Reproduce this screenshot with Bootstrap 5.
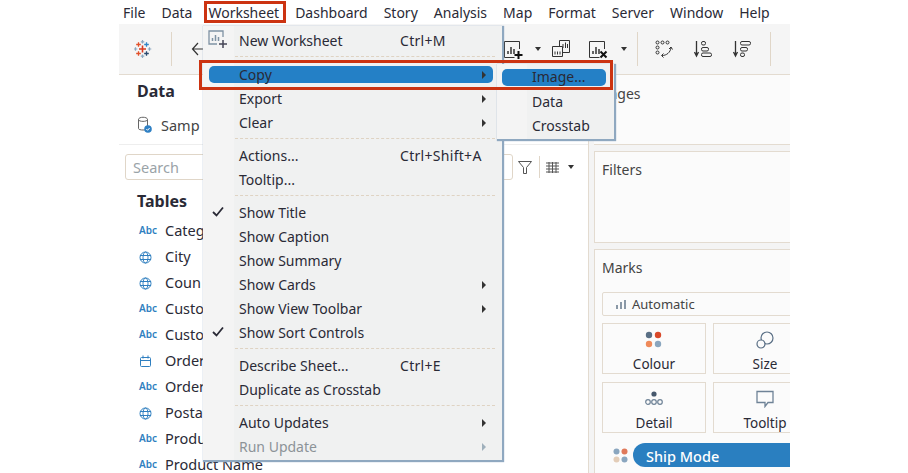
<!DOCTYPE html>
<html lang="en"><head><meta charset="utf-8"><title>Worksheet menu</title>
<link href="https://cdn.jsdelivr.net/npm/bootstrap@5.3.0/dist/css/bootstrap.min.css" rel="stylesheet">
<style>
html,body{height:473px;overflow:hidden;background:#fff}
body{font-family:"Noto Sans","Open Sans","Liberation Sans",sans-serif;color:#2a2a36;font-size:14px}
.app{position:relative;width:671px;height:473px;margin-left:119px;overflow:hidden}
.mbar{height:24px;padding-left:4px;gap:16.040px;font-size:14px;line-height:26px;white-space:nowrap}
.tbar{height:51px;background:#f5f5f5;border-bottom:1px solid #e3dbd0;padding-right:19px}
.tsep{width:1px;height:34px;background:#e0d6c8}
.tcaret{width:0;height:0;border-left:3px solid transparent;border-right:3px solid transparent;border-top:4px solid #333}
.t-logo{margin-left:15px}.t-sep1{margin-left:19px}.t-back{margin-left:19px}
.t-car1{margin-left:10.500px}.t-ic2{margin-left:11.500px}.t-ic3{margin-left:19px}.t-car2{margin-left:12px}.t-sep2{margin-left:10px}
.t-ic4{margin-left:17px}.t-ic5{margin-left:21px}.t-ic6{margin-left:20px}.t-sep3{margin-left:19px}
.main{height:398px}
.dpane{width:470px;flex:none;border-right:1px solid #e3dbd0;background:#fff}
.dhead{height:70px;border-bottom:1px solid #eee;padding:4px 0 0 18px}
.dtitle{font-weight:700;font-size:16px;line-height:24px}
.dsrc{margin-top:11px;font-size:14.500px;line-height:22px;color:#444;gap:8px}
.stool{height:26px;margin:9px 0 0 6px}
.sbox{width:388px;height:26px;border:1px solid #e0d6c8;border-radius:3px;padding-left:7px;color:#9aa3a8;line-height:24px;font-size:14.500px}
.s-fun{margin-left:4px}.s-sep{height:22px;margin-left:6px}.s-list{margin-left:6px}.s-car{margin-left:9px}
.tabh{font-weight:700;font-size:16px;line-height:22px;margin:10px 0 5px 18px}
.frow{height:26px;line-height:26px;font-size:14.500px;white-space:nowrap;padding-left:20px}
.ficon{width:26px;flex:none;color:#2f7fc0;font-size:10px;font-weight:600}
.rpane{flex:1;background:#f4f4f4;overflow:hidden;padding-left:5px}
.rbox{width:240px;background:#fbfbfb;border:1px solid #e3dbd0;padding-left:7px;color:#444;font-size:14px}
.rpages{height:70px;border-width:0 0 1px 0;padding-top:8px}
.rfilters{height:92px;margin-top:6px;padding-top:7px}
.rmarks{height:240px;margin-top:6px;padding-top:7px}
.autobox{height:24px;width:220px;margin-top:14px;border:1px solid #e3dbd0;border-radius:2px;font-size:13px;padding-left:13px;gap:6px;line-height:22px}
.tiles{display:grid;grid-template-columns:104px 104px;gap:8px 7px;margin-top:7px}
.tile{height:51px;border:1px solid #e3dbd0;text-align:center;font-size:13.500px;color:#2a2a36;line-height:18px;padding-top:7px}
.tile svg{display:block;margin:0 auto 6px}
.shelf{margin-top:10px;gap:5px}
.s-dots{margin-left:11px}
.spill{height:24px;width:190px;background:#2a7fc0;color:#fff;border-radius:12px 0 0 12px;padding-left:13px;font-size:14.500px;font-weight:500;line-height:26px}
.wmenu.dropdown-menu{border:0;border-radius:0;background:#f0f1f1;padding:3px 0 1px;margin:0;min-width:0;color:#2a2a36;font-size:14px;box-shadow:1px 1px 1px 1px #8fa8c0;z-index:5}
.mmain{left:84px;top:26px;width:299px}
.msub{left:378px;top:64px;width:117px;z-index:6!important;padding-top:1px!important}
.wmenu::before{content:"";position:absolute;left:0;top:0;bottom:0;background:#f4f4f4}
.mmain::before{width:31px}
.msub::before{width:30px}
.wmenu .dropdown-item{position:relative;height:24px;line-height:24px;padding:0 0 0 36px;color:#2a2a36;background:none;white-space:nowrap;z-index:1}
.msub .dropdown-item{padding-left:35px}
.msub .dropdown-item.msel{margin-bottom:1px}
.wmenu .mkey{position:absolute;left:197px;top:0;letter-spacing:.3px}
.wmenu .marrow{position:absolute;right:16px;top:8px;width:0;height:0;border-top:4px solid transparent;border-bottom:4px solid transparent;border-left:4px solid #333}
.wmenu .mcheck{position:absolute;left:9px;top:5px}
.wmenu .micon{position:absolute;left:5px;top:1px}
.wmenu .dropdown-item.msel::before{content:"";position:absolute;z-index:-1;left:6px;right:9px;top:3px;height:17px;background:#2480c6;border-radius:5px}
.msub .dropdown-item.msel::before{left:5px;right:8px;top:4px}
.wmenu .dropdown-item.disabled{color:#8c9398}
.wmenu .disabled .marrow{border-left-color:#9fb0bc}
.msepa{position:relative;height:9px;z-index:1}
.msepa.tall{height:10px}
.msepa::after{content:"";position:absolute;left:32px;right:7px;top:3px;border-top:1px dashed #dfd3c3}
.rmark{position:absolute;border:3px solid #cc3311;z-index:9;pointer-events:none}
.rm1{left:85px;top:1px;width:82px;height:22px}
.rm2{left:80px;top:60px;width:414px;height:30px}
</style></head><body>
<div class="app">
  <div class="mbar d-flex">
    <span>File</span><span>Data</span><span>Worksheet</span><span>Dashboard</span><span>Story</span><span>Analysis</span><span>Map</span><span>Format</span><span>Server</span><span>Window</span><span>Help</span>
  </div>
  <div class="tbar d-flex align-items-center">
    <svg class="t-logo" width="18" height="18" viewBox="0 0 18 18" fill="none">
      <path stroke="#d9391e" stroke-width="1.600" d="M8.500 5.500v7M5 9h7"/>
      <path stroke="#e2502a" stroke-width="1.300" d="M4.500 2.200v4.600M2.200 4.500h4.600M4.500 11.200v4.600M2.200 13.500h4.600"/>
      <path stroke="#2f86c8" stroke-width="1.300" d="M12.500 2.200v4.600M10.200 4.500h4.600"/>
      <path stroke="#2b4a70" stroke-width="1.300" d="M12.500 11.200v4.600M10.200 13.500h4.600"/>
      <path stroke="#8aa6bf" stroke-width="1.200" d="M8.500 0v3.500M6.800 1.800h3.500M8.500 14.500V18M6.800 16.200h3.500M1.500 7.200v3.500M0 9h3.300M15.500 7.200v3.500M13.800 9h3.500"/>
    </svg>
    <span class="tsep t-sep1"></span>
    <svg class="t-back" width="16" height="14" viewBox="0 0 16 14" fill="none" stroke="#333" stroke-width="1.200"><path d="M7 1 1.500 7 7 13M1.500 7H16"/></svg>
    <div class="ms-auto d-flex align-items-center">
      <svg width="20" height="20" viewBox="0 0 20 20" fill="none" stroke="#333"><path d="M15.500 10V2.500H.5v16h10"/><path d="M4 15v-3M7 15V8M10 15v-5" stroke-width="1.500"/><path d="M14.500 12v8M10.500 16h8" stroke="#111" stroke-width="2"/></svg>
      <span class="tcaret t-car1"></span>
      <svg class="t-ic2" width="18" height="18" viewBox="0 0 18 18" fill="none" stroke="#333"><path d="M7.500 6V.5h10v12h-7"/><path d="M.5 6.500h10v10H.5z" fill="#f5f5f5"/><path d="M3 14.500v-3M5.500 14.500v-3M8 14.500v-3M11 8V4M13.500 8V2.500M15.500 8V4"/></svg>
      <svg class="t-ic3" width="20" height="20" viewBox="0 0 20 20" fill="none" stroke="#333"><path d="M15.500 10V2.500H.5v16h10"/><path d="M4 15v-3M7 15V8M10 15v-5" stroke-width="1.500"/><path d="M11.500 12.500l6 6M17.500 12.500l-6 6" stroke="#111" stroke-width="2"/></svg>
      <span class="tcaret t-car2"></span>
      <span class="tsep t-sep2"></span>
      <svg class="t-ic4" width="18" height="18" viewBox="0 0 18 18" fill="none" stroke="#333"><circle cx="2.500" cy="2.500" r="1.500"/><circle cx="7.500" cy="2.500" r="1.500"/><circle cx="12.500" cy="2.500" r="1.500"/><circle cx="2.500" cy="7.500" r="1.500"/><circle cx="2.500" cy="12.500" r="1.500"/><path d="M7 15.500c4.500 0 8.500-3 9-8M14 9l2-2 1.500 2.500M8.500 13.500 6.500 15.500l2 2"/></svg>
      <svg class="t-ic5" width="18" height="18" viewBox="0 0 18 18" fill="none" stroke="#333"><path d="M2.500 1v15M.5 12l2 4 2-4" stroke-width="1.300"/><rect x="7.500" y="1.500" width="4" height="3.500" rx="1.500"/><rect x="7.500" y="7.500" width="7" height="3.500" rx="1.500"/><rect x="7.500" y="13" width="10" height="3.500" rx="1.500"/></svg>
      <svg class="t-ic6" width="19" height="18" viewBox="0 0 19 18" fill="none" stroke="#333"><path d="M3.500 1v15M1.500 12l2 4 2-4" stroke-width="1.300"/><rect x="8.500" y="1.500" width="10" height="3.500" rx="1.500"/><rect x="8.500" y="7.500" width="7" height="3.500" rx="1.500"/><rect x="8.500" y="13" width="4" height="3.500" rx="1.500"/></svg>
      <span class="tsep t-sep3"></span>
    </div>
  </div>
  <div class="main d-flex">
    <div class="dpane">
      <div class="dhead">
        <div class="dtitle">Data</div>
        <div class="dsrc d-flex align-items-center">
          <svg width="16" height="18" viewBox="0 0 16 18" fill="none"><path d="M1.500 3.500c0-3 9-3 9 0v9c0 2-9 2-9 0zM1.500 3.500c0 2.500 9 2.500 9 0" stroke="#666"/><circle cx="11" cy="13" r="3.800" fill="#2f80c4"/><path d="m9.300 13 1.300 1.300 2-2.300" stroke="#fff"/></svg>
          <span>Samp</span>
        </div>
      </div>
      <div class="stool d-flex align-items-center">
        <div class="sbox">Search</div>
        <svg class="s-fun" width="16" height="16" viewBox="0 0 16 16" fill="none" stroke="#555"><path d="M1.500 2.500h13L9.500 8.500v6h-3v-6z"/></svg>
        <span class="tsep s-sep"></span>
        <svg class="s-list" width="13" height="11" viewBox="0 0 13 11" stroke="#555"><path d="M0 1h13M0 4h13M0 7h13M0 10h13M3 0v11M6.500 0v11M10 0v11"/></svg>
        <span class="tcaret s-car"></span>
      </div>
      <div class="tabh">Tables</div>
      <div class="frow d-flex"><span class="ficon">Abc</span><span>Categ</span></div>
      <div class="frow d-flex"><span class="ficon"><svg width="13" height="13" viewBox="0 0 13 13" fill="none" stroke="#2f7fc0"><circle cx="6.500" cy="6.500" r="5.500"/><ellipse cx="6.500" cy="6.500" rx="2.500" ry="5.500"/><path d="M1 4.500h11M1 8.500h11"/></svg></span><span>City</span></div>
      <div class="frow d-flex"><span class="ficon"><svg width="13" height="13" viewBox="0 0 13 13" fill="none" stroke="#2f7fc0"><circle cx="6.500" cy="6.500" r="5.500"/><ellipse cx="6.500" cy="6.500" rx="2.500" ry="5.500"/><path d="M1 4.500h11M1 8.500h11"/></svg></span><span>Coun</span></div>
      <div class="frow d-flex"><span class="ficon">Abc</span><span>Custo</span></div>
      <div class="frow d-flex"><span class="ficon">Abc</span><span>Custo</span></div>
      <div class="frow d-flex"><span class="ficon"><svg width="13" height="13" viewBox="0 0 13 13" fill="none" stroke="#2f7fc0"><rect x="1.500" y="2.500" width="10" height="9" rx="1"/><path d="M1.500 5.500h10M4 .5v3M9 .5v3"/></svg></span><span>Order</span></div>
      <div class="frow d-flex"><span class="ficon">Abc</span><span>Order</span></div>
      <div class="frow d-flex"><span class="ficon"><svg width="13" height="13" viewBox="0 0 13 13" fill="none" stroke="#2f7fc0"><circle cx="6.500" cy="6.500" r="5.500"/><ellipse cx="6.500" cy="6.500" rx="2.500" ry="5.500"/><path d="M1 4.500h11M1 8.500h11"/></svg></span><span>Posta</span></div>
      <div class="frow d-flex"><span class="ficon">Abc</span><span>Produ</span></div>
      <div class="frow d-flex"><span class="ficon">Abc</span><span>Product Name</span></div>
    </div>
    <div class="rpane">
      <div class="rbox rpages">Pages</div>
      <div class="rbox rfilters">Filters</div>
      <div class="rbox rmarks">Marks
        <div class="autobox d-flex align-items-center">
          <svg width="10" height="9" viewBox="0 0 10 9" fill="#8a98a6"><path d="M0 5h2v4H0zM4 2h2v7H4zM8 0h2v9H8z"/></svg><span>Automatic</span>
        </div>
        <div class="tiles">
          <div class="tile"><svg width="18" height="18" viewBox="0 0 18 18"><circle cx="4" cy="4" r="3.200" fill="#5a6f85"/><circle cx="13" cy="4" r="3.200" fill="#d9492a"/><circle cx="4" cy="13" r="3.200" fill="#ef8a5a"/><circle cx="13" cy="13" r="3.200" fill="#8aa6bf"/></svg>Colour</div>
          <div class="tile"><svg width="18" height="18" viewBox="0 0 18 18" fill="none" stroke="#5a6f85" stroke-width="1.200"><circle cx="11" cy="7" r="6"/><circle cx="5" cy="13" r="4" fill="#fbfbfb"/></svg>Size</div>
          <div class="tile"><svg width="20" height="18" viewBox="0 0 20 18" fill="none" stroke="#6f8397" stroke-width="1.200"><circle cx="10" cy="4" r="2.600" fill="#46586c" stroke="none"/><circle cx="4" cy="12" r="2.300"/><circle cx="10" cy="12" r="2.300"/><circle cx="16" cy="12" r="2.300"/></svg>Detail</div>
          <div class="tile"><svg width="18" height="18" viewBox="0 0 18 18" fill="none" stroke="#6f8397" stroke-width="1.300"><path d="M1 1.500h16v11h-5l-3 4v-4H1z"/></svg>Tooltip</div>
        </div>
        <div class="shelf d-flex align-items-center">
          <svg class="s-dots" width="15" height="15" viewBox="0 0 15 15"><circle cx="3.500" cy="3.500" r="3" fill="#8aa6bf"/><circle cx="11.500" cy="3.500" r="3" fill="#e0795a"/><circle cx="3.500" cy="11.500" r="3" fill="#e3cdb8"/><circle cx="11.500" cy="11.500" r="3" fill="#8aa6bf"/></svg>
          <div class="spill">Ship Mode</div>
        </div>
      </div>
    </div>
  </div>

  <ul class="dropdown-menu show wmenu mmain list-unstyled">
    <li class="dropdown-item"><svg class="micon" width="20" height="20" viewBox="0 0 20 20" fill="none"><path d="M15 7V1H1v13h8" stroke="#7f92a4" stroke-width="1.300"/><path d="M4.500 11V8M7.500 11V5M10.500 11V7" stroke="#7f92a4" stroke-width="1.500"/><path d="M15 10v8M11 14h8" stroke="#445" stroke-width="1.500"/></svg>New Worksheet<span class="mkey">Ctrl+M</span></li>
    <li class="msepa tall"></li>
    <li class="dropdown-item msel">Copy<span class="marrow"></span></li>
    <li class="dropdown-item">Export<span class="marrow"></span></li>
    <li class="dropdown-item">Clear<span class="marrow"></span></li>
    <li class="msepa"></li>
    <li class="dropdown-item">Actions...<span class="mkey">Ctrl+Shift+A</span></li>
    <li class="dropdown-item">Tooltip...</li>
    <li class="msepa"></li>
    <li class="dropdown-item"><svg class="mcheck" width="12" height="11" viewBox="0 0 12 11" fill="none" stroke="#2a2a36" stroke-width="1.800"><path d="m1 6 3.500 3.500L11 1.500"/></svg>Show Title</li>
    <li class="dropdown-item">Show Caption</li>
    <li class="dropdown-item">Show Summary</li>
    <li class="dropdown-item">Show Cards<span class="marrow"></span></li>
    <li class="dropdown-item">Show View Toolbar<span class="marrow"></span></li>
    <li class="dropdown-item"><svg class="mcheck" width="12" height="11" viewBox="0 0 12 11" fill="none" stroke="#2a2a36" stroke-width="1.800"><path d="m1 6 3.500 3.500L11 1.500"/></svg>Show Sort Controls</li>
    <li class="msepa"></li>
    <li class="dropdown-item">Describe Sheet...<span class="mkey">Ctrl+E</span></li>
    <li class="dropdown-item">Duplicate as Crosstab</li>
    <li class="msepa"></li>
    <li class="dropdown-item">Auto Updates<span class="marrow"></span></li>
    <li class="dropdown-item disabled">Run Update<span class="marrow"></span></li>
  </ul>
  <ul class="dropdown-menu show wmenu msub list-unstyled">
    <li class="dropdown-item msel">Image...</li>
    <li class="dropdown-item">Data</li>
    <li class="dropdown-item">Crosstab</li>
  </ul>
  <div class="rmark rm1"></div>
  <div class="rmark rm2"></div>
</div>
</body></html>
